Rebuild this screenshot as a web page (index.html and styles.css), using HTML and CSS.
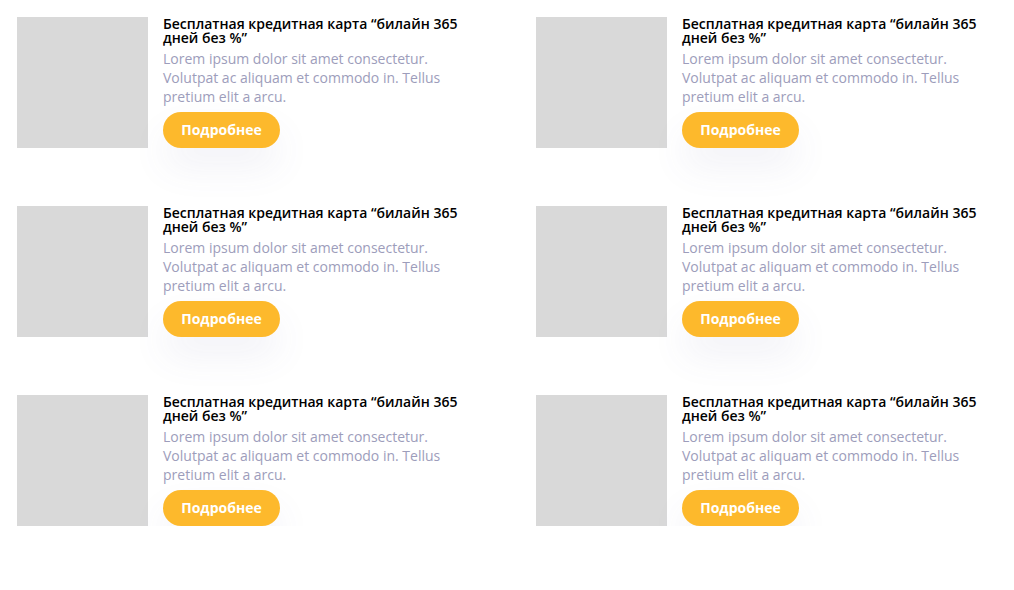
FILE: index.html
```html
<!DOCTYPE html>
<html lang="ru">
<head>
<meta charset="utf-8">
<link rel="stylesheet" href="styles.css">
</head>
<body>
<div class="grid">
  <div class="card"><div class="thumb"></div><div class="info"><h3 class="title">Бесплатная кредитная карта “билайн 365 дней без %”</h3><p class="desc">Lorem ipsum dolor sit amet consectetur. Volutpat ac aliquam et commodo in. Tellus pretium elit a arcu.</p><button class="btn">Подробнее</button></div></div>
  <div class="card"><div class="thumb"></div><div class="info"><h3 class="title">Бесплатная кредитная карта “билайн 365 дней без %”</h3><p class="desc">Lorem ipsum dolor sit amet consectetur. Volutpat ac aliquam et commodo in. Tellus pretium elit a arcu.</p><button class="btn">Подробнее</button></div></div>
  <div class="card"><div class="thumb"></div><div class="info"><h3 class="title">Бесплатная кредитная карта “билайн 365 дней без %”</h3><p class="desc">Lorem ipsum dolor sit amet consectetur. Volutpat ac aliquam et commodo in. Tellus pretium elit a arcu.</p><button class="btn">Подробнее</button></div></div>
  <div class="card"><div class="thumb"></div><div class="info"><h3 class="title">Бесплатная кредитная карта “билайн 365 дней без %”</h3><p class="desc">Lorem ipsum dolor sit amet consectetur. Volutpat ac aliquam et commodo in. Tellus pretium elit a arcu.</p><button class="btn">Подробнее</button></div></div>
  <div class="card"><div class="thumb"></div><div class="info"><h3 class="title">Бесплатная кредитная карта “билайн 365 дней без %”</h3><p class="desc">Lorem ipsum dolor sit amet consectetur. Volutpat ac aliquam et commodo in. Tellus pretium elit a arcu.</p><button class="btn">Подробнее</button></div></div>
  <div class="card"><div class="thumb"></div><div class="info"><h3 class="title">Бесплатная кредитная карта “билайн 365 дней без %”</h3><p class="desc">Lorem ipsum dolor sit amet consectetur. Volutpat ac aliquam et commodo in. Tellus pretium elit a arcu.</p><button class="btn">Подробнее</button></div></div>
</div>
</body>
</html>
```
FILE: styles.css
```css
* { box-sizing: border-box; }
html, body { margin: 0; padding: 0; background: #ffffff; }
body { font-family: "Open Sans", "Liberation Sans", sans-serif; }
.grid {
  display: grid;
  grid-template-columns: 519px 460px;
  row-gap: 58px;
  padding: 17px 0 0 17px;
}
.card {
  display: flex;
  gap: 15px;
  height: 131px;
}
.thumb {
  width: 131px;
  height: 131px;
  flex: none;
  background: #d9d9d9;
}
.info {
  width: 305px;
  display: flex;
  flex-direction: column;
  align-items: flex-start;
}
.title {
  margin: 0;
  font-size: 14px;
  line-height: 14px;
  font-weight: 600;
  color: #000000;
}
.desc {
  margin: 4px 0 0;
  font-size: 14px;
  line-height: 19px;
  color: #9d9dbb;
}
.btn {
  margin-top: 6px;
  width: 117px;
  height: 36px;
  border: none;
  border-radius: 18px;
  background: #fdb92c;
  color: #ffffff;
  font-family: inherit;
  font-size: 14px;
  line-height: 18px;
  font-weight: 700;
  padding: 0 0 1px;
  box-shadow: 0 20px 36px rgba(90, 90, 150, 0.08);
}
```
